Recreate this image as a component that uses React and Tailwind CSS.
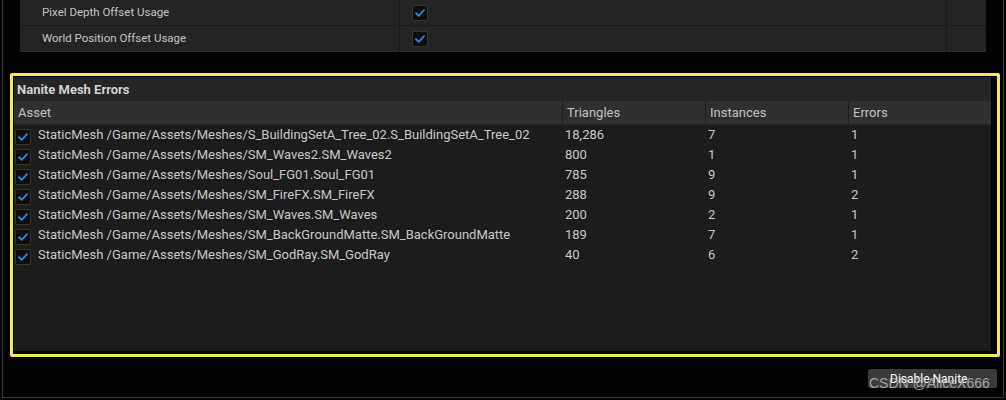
const props = [
  { label: "Pixel Depth Offset Usage", checked: true },
  { label: "World Position Offset Usage", checked: true },
];

const meshes = [
  { asset: "StaticMesh /Game/Assets/Meshes/S_BuildingSetA_Tree_02.S_BuildingSetA_Tree_02", tris: "18,286", inst: "7", errs: "1" },
  { asset: "StaticMesh /Game/Assets/Meshes/SM_Waves2.SM_Waves2", tris: "800", inst: "1", errs: "1" },
  { asset: "StaticMesh /Game/Assets/Meshes/Soul_FG01.Soul_FG01", tris: "785", inst: "9", errs: "1" },
  { asset: "StaticMesh /Game/Assets/Meshes/SM_FireFX.SM_FireFX", tris: "288", inst: "9", errs: "2" },
  { asset: "StaticMesh /Game/Assets/Meshes/SM_Waves.SM_Waves", tris: "200", inst: "2", errs: "1" },
  { asset: "StaticMesh /Game/Assets/Meshes/SM_BackGroundMatte.SM_BackGroundMatte", tris: "189", inst: "7", errs: "1" },
  { asset: "StaticMesh /Game/Assets/Meshes/SM_GodRay.SM_GodRay", tris: "40", inst: "6", errs: "2" },
];

function CheckBox() {
  return (
    <div className="w-[16px] h-[16px] rounded-[2px] bg-[#0e0e0e] border border-[#353535] flex items-center justify-center">
      <svg width="10" height="8" viewBox="0 0 10 8" fill="none">
        <path d="M1 4.2 L3.8 6.8 L9 1.2" stroke="#2b7fe3" strokeWidth="1.9" strokeLinecap="round" strokeLinejoin="round" />
      </svg>
    </div>
  );
}

export default function App() {
  return (
    <div className="w-[1006px] h-[400px] bg-[#030303] overflow-hidden" style={{ fontFamily: "Roboto, 'Liberation Sans', sans-serif" }}>
      <div className="relative ml-[2px] w-[1002px] h-[398px] border-l border-r border-b border-[#3a3a3a]">
        {/* details panel, scrolled */}
        <div className="ml-[17px] w-[966px] h-[52px] bg-[#242424] border-b border-[#2e2e2e]">
          {props.map((p, i) => (
            <div key={i} className={`flex h-[26px] ${i === 0 ? "border-b border-[#1b1b1b]" : ""}`}>
              <div className="w-[380px] pl-[22px] flex items-center text-[11.5px] text-[#c4c4c4] border-r border-[#1b1b1b]">
                {p.label}
              </div>
              <div className="w-[547px] pl-[12px] flex items-center border-r border-[#1b1b1b]">
                {p.checked && <CheckBox />}
              </div>
              <div className="flex-1" />
            </div>
          ))}
        </div>

        {/* highlighted Nanite errors box */}
        <div className="mt-[21px] ml-[7px] w-[990px] h-[284px] border-[3px] border-[#f3e85e] rounded-[2px] p-px pr-[6px] pb-[3px]">
          <div className="w-full h-full bg-[#1c1c1c] flex flex-col">
            <div className="h-[24px] bg-[#252525] flex items-center pl-[3px] pt-px text-[13px] font-bold text-[#d2d2d2]">
              Nanite Mesh Errors
            </div>
            <div className="h-[24px] bg-[#2f2f2f] flex text-[13px] text-[#c2c2c2] border-b border-[#232323]">
              <div className="w-[549px] pl-[4px] flex items-center border-r border-[#1f1f1f]">Asset</div>
              <div className="w-[143px] pl-[4px] flex items-center border-r border-[#1f1f1f]">Triangles</div>
              <div className="w-[143px] pl-[4px] flex items-center border-r border-[#1f1f1f]">Instances</div>
              <div className="flex-1 pl-[4px] flex items-center">Errors</div>
            </div>
            <div className="flex-1 flex flex-col">
              {meshes.map((m, i) => (
                <div key={i} className="h-[20px] flex items-center text-[13px] text-[#c8c8c8]">
                  <div className="w-[549px] flex items-center">
                    <div className="ml-[1px] mt-[3px]">
                      <CheckBox />
                    </div>
                    <span className="ml-[7px] whitespace-nowrap">{m.asset}</span>
                  </div>
                  <div className="w-[143px] pl-[2px]">{m.tris}</div>
                  <div className="w-[143px] pl-[2px]">{m.inst}</div>
                  <div className="flex-1 pl-[2px]">{m.errs}</div>
                </div>
              ))}
            </div>
          </div>
        </div>

        {/* footer button */}
        <div className="flex justify-end mt-[12px] pr-[6px]">
          <div className="w-[129px] h-[19px] bg-[#3b3b3b] rounded-[2px] flex items-center pl-[22px] text-[12px] text-white">
            Disable Nanite
          </div>
        </div>

        {/* watermark */}
        <div className="absolute left-[866px] top-[373px] text-[14px] text-[#bdbdbd] opacity-80 whitespace-nowrap" style={{ fontFamily: "'Liberation Sans', Arial, sans-serif" }}>
          CSDN @AliceX666
        </div>
      </div>
    </div>
  );
}
